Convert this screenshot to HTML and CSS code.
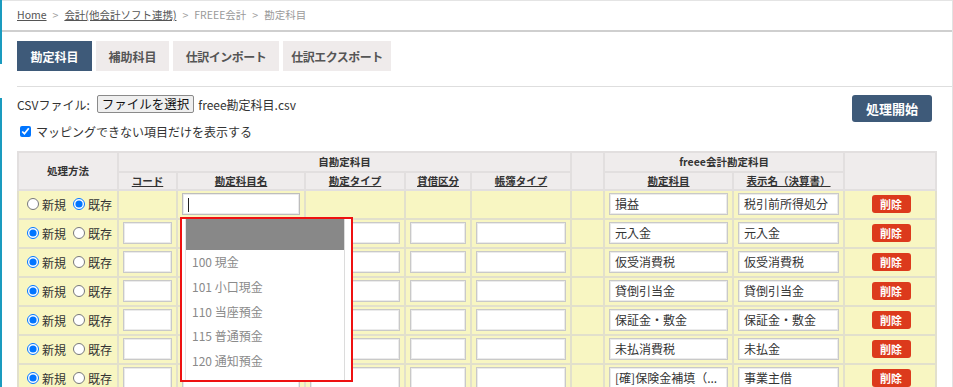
FILE: index.html
```html
<!DOCTYPE html>
<html lang="ja">
<head>
<meta charset="utf-8">
<title>勘定科目</title>
<link rel="stylesheet" href="styles.css">
</head>
<body>
<div class="page">
  <div class="rail"></div>
  <div class="main">
    <nav class="crumbs">
      <a href="#">Home</a><span class="sep">&gt;</span><a href="#">会計(他会計ソフト連携)</a><span class="sep">&gt;</span><span class="cur">FREEE会計</span><span class="sep">&gt;</span><span class="cur">勘定科目</span>
    </nav>
    <div class="tabs">
      <span class="tab active w-75">勘定科目</span>
      <span class="tab w-73">補助科目</span>
      <span class="tab kana w-106">仕訳インポート</span>
      <span class="tab kana w-108">仕訳エクスポート</span>
    </div>
    <div class="content">
      <div class="toolbar">
        <div class="file-row">
          <span>CSVファイル:</span>
          <button class="file-btn" type="button">ファイルを選択</button>
          <span>freee勘定科目.csv</span>
        </div>
        <button class="start-btn" type="button">処理開始</button>
      </div>
      <label class="check"><input type="checkbox" checked> マッピングできない項目だけを表示する</label>
      <table class="grid">
        <colgroup>
          <col class="c-method"><col class="c-code"><col class="c-name"><col class="c-type"><col class="c-side"><col class="c-book"><col class="c-blank"><col class="c-fname"><col class="c-fdisp"><col class="c-del">
        </colgroup>
        <thead>
          <tr>
            <th rowspan="2">処理方法</th>
            <th colspan="5">自勘定科目</th>
            <th rowspan="2"></th>
            <th colspan="2">freee会計勘定科目</th>
            <th rowspan="2"></th>
          </tr>
          <tr>
            <th><u>コード</u></th>
            <th><u>勘定科目名</u></th>
            <th><u>勘定タイプ</u></th>
            <th><u>貸借区分</u></th>
            <th><u>帳簿タイプ</u></th>
            <th><u>勘定科目</u></th>
            <th><u>表示名（決算書）</u></th>
          </tr>
        </thead>
        <tbody>
          <tr>
            <td class="method"><label><input type="radio" name="m1"> 新規</label><label><input type="radio" name="m1" checked> 既存</label></td>
            <td></td>
            <td class="anchor">
              <div class="field focus"><span class="caret"></span></div>
              <div class="dropdown">
                <div class="dd-inner">
                  <div class="dd-hl"></div>
                  <div class="dd-item">100 現金</div>
                  <div class="dd-item">101 小口現金</div>
                  <div class="dd-item">110 当座預金</div>
                  <div class="dd-item">115 普通預金</div>
                  <div class="dd-item">120 通知預金</div>
                </div>
              </div>
            </td>
            <td></td><td></td><td></td><td></td>
            <td><div class="field">損益</div></td>
            <td><div class="field">税引前所得処分</div></td>
            <td class="del"><button class="del-btn" type="button">削除</button></td>
          </tr>
          <tr>
            <td class="method"><label><input type="radio" name="m2" checked> 新規</label><label><input type="radio" name="m2"> 既存</label></td>
            <td><div class="field"></div></td><td><div class="field"></div></td><td><div class="field"></div></td><td><div class="field"></div></td><td><div class="field"></div></td><td></td>
            <td><div class="field">元入金</div></td><td><div class="field">元入金</div></td>
            <td class="del"><button class="del-btn" type="button">削除</button></td>
          </tr>
          <tr>
            <td class="method"><label><input type="radio" name="m3" checked> 新規</label><label><input type="radio" name="m3"> 既存</label></td>
            <td><div class="field"></div></td><td><div class="field"></div></td><td><div class="field"></div></td><td><div class="field"></div></td><td><div class="field"></div></td><td></td>
            <td><div class="field">仮受消費税</div></td><td><div class="field">仮受消費税</div></td>
            <td class="del"><button class="del-btn" type="button">削除</button></td>
          </tr>
          <tr>
            <td class="method"><label><input type="radio" name="m4" checked> 新規</label><label><input type="radio" name="m4"> 既存</label></td>
            <td><div class="field"></div></td><td><div class="field"></div></td><td><div class="field"></div></td><td><div class="field"></div></td><td><div class="field"></div></td><td></td>
            <td><div class="field">貸倒引当金</div></td><td><div class="field">貸倒引当金</div></td>
            <td class="del"><button class="del-btn" type="button">削除</button></td>
          </tr>
          <tr>
            <td class="method"><label><input type="radio" name="m5" checked> 新規</label><label><input type="radio" name="m5"> 既存</label></td>
            <td><div class="field"></div></td><td><div class="field"></div></td><td><div class="field"></div></td><td><div class="field"></div></td><td><div class="field"></div></td><td></td>
            <td><div class="field">保証金・敷金</div></td><td><div class="field">保証金・敷金</div></td>
            <td class="del"><button class="del-btn" type="button">削除</button></td>
          </tr>
          <tr>
            <td class="method"><label><input type="radio" name="m6" checked> 新規</label><label><input type="radio" name="m6"> 既存</label></td>
            <td><div class="field"></div></td><td><div class="field"></div></td><td><div class="field"></div></td><td><div class="field"></div></td><td><div class="field"></div></td><td></td>
            <td><div class="field">未払消費税</div></td><td><div class="field">未払金</div></td>
            <td class="del"><button class="del-btn" type="button">削除</button></td>
          </tr>
          <tr>
            <td class="method"><label><input type="radio" name="m7" checked> 新規</label><label><input type="radio" name="m7"> 既存</label></td>
            <td><div class="field"></div></td><td><div class="field"></div></td><td><div class="field"></div></td><td><div class="field"></div></td><td><div class="field"></div></td><td></td>
            <td><div class="field">[確]保険金補填（...</div></td><td><div class="field">事業主借</div></td>
            <td class="del"><button class="del-btn" type="button">削除</button></td>
          </tr>
        </tbody>
      </table>
    </div>
  </div>
</div>
</body>
</html>
```
FILE: styles.css
```css
html, body {
  margin: 0;
  padding: 0;
  background: #fff;
  height: 387px;
  overflow: hidden;
}
body {
  font-family: "Noto Sans CJK JP", sans-serif;
  font-size: 12px;
  color: #333;
}
.page {
  display: flex;
  align-items: stretch;
  min-height: 387px;
}
.rail {
  width: 2px;
  flex: 0 0 2px;
  background: linear-gradient(to bottom, #1a9bbf 0, #1a9bbf 64px, #fff 64px, #fff 98px, #1a9bbf 98px, #1a9bbf 100%);
}
.main {
  flex: 1;
  min-width: 0;
  border-right: 1px solid #e2e2e2;
}
.crumbs {
  height: 29px;
  border-top: 1px solid #e4e4e4;
  border-bottom: 2px solid #cfcfcf;
  padding-left: 15px;
  display: flex;
  align-items: center;
  font-size: 10.5px;
  line-height: 1;
  color: #9a9a9a;
}
.crumbs a {
  color: #555;
  text-decoration: underline;
}
.crumbs .sep {
  margin: 0 6px;
  color: #999;
}
.tabs {
  display: flex;
  gap: 4px;
  margin: 9px 0 0 15px;
  padding-bottom: 15px;
  border-bottom: 1px solid #dedede;
}
.tab {
  height: 30px;
  display: flex;
  align-items: center;
  justify-content: center;
  background: #efebeb;
  color: #555;
  font-weight: bold;
  font-size: 12px;
  white-space: nowrap;
}
.tab.kana {
  letter-spacing: -0.5px;
}
.tab.active {
  background: #3e5a79;
  color: #fff;
}
.w-75 { width: 75px; }
.w-73 { width: 73px; }
.w-106 { width: 106px; }
.w-108 { width: 108px; }
.content {
  padding: 0 20px 0 15px;
}
.toolbar {
  display: flex;
  justify-content: space-between;
  align-items: flex-start;
  padding-top: 8px;
}
.file-row {
  display: flex;
  align-items: center;
  gap: 4px;
  font-size: 12px;
  height: 18px;
}
.file-btn {
  font-family: inherit;
  font-size: 12.5px;
  line-height: 1;
  height: 18px;
  padding: 0 4px;
  margin-left: 3px;
  background: #efefef;
  border: 1px solid #8a8a8a;
  border-radius: 2px;
  color: #111;
}
.start-btn {
  font-family: inherit;
  font-weight: bold;
  font-size: 13px;
  color: #fff;
  background: #3e5a79;
  border: none;
  border-radius: 3px;
  width: 80px;
  height: 27px;
  padding: 0;
}
.check {
  display: flex;
  align-items: center;
  gap: 5px;
  margin-top: 1px;
  height: 16px;
  font-size: 12px;
}
.check input {
  margin: 0 0 0 3px;
  width: 11px;
  height: 11px;
}
.grid {
  margin-top: 12px;
  width: 918px;
  table-layout: fixed;
  border-collapse: collapse;
}
.c-method { width: 100px; }
.c-code { width: 59px; }
.c-name { width: 128px; }
.c-type { width: 100px; }
.c-side { width: 66px; }
.c-book { width: 100px; }
.c-blank { width: 33px; }
.c-fname { width: 129px; }
.c-fdisp { width: 111px; }
.c-del { width: 92px; }
.grid th {
  background: #efecec;
  border: 2px solid #e2dfdf;
  font-size: 10.5px;
  font-weight: bold;
  color: #333;
  height: 16px;
  padding: 0;
  line-height: 16px;
}
.grid thead tr:first-child th {
  height: 18px;
}
.grid th u {
  text-decoration: underline;
}
.grid td {
  background: #f8f6c2;
  border: 2px solid #e2e0cc;
  padding: 2px 4px 3px;
  height: 22px;
  vertical-align: middle;
}
.grid td.method {
  padding: 0 0 0 8px;
  white-space: nowrap;
}
.method label {
  display: inline-flex;
  align-items: center;
  margin-right: 7px;
  font-size: 12px;
}
.method input {
  margin: 0 3px 0 0;
  width: 12px;
  height: 12px;
}
.field {
  box-sizing: border-box;
  height: 22px;
  width: 100%;
  background: #fff;
  border: 1px solid #c9c9c9;
  box-shadow: inset 0 0 0 1px #ebebeb;
  font-size: 12px;
  line-height: 20px;
  padding: 0 5px;
  white-space: nowrap;
  overflow: hidden;
  color: #333;
}
.field.focus {
  border-color: #bdbdbd;
}
.caret {
  display: inline-block;
  width: 1px;
  height: 14px;
  background: #222;
  vertical-align: middle;
  margin-top: -2px;
}
.anchor {
  position: relative;
}
.dropdown {
  position: absolute;
  left: 2px;
  top: 26px;
  width: 173px;
  height: 165px;
  box-sizing: border-box;
  border: 2px solid #ee1111;
  background: #fff;
  z-index: 5;
}
.dd-inner {
  margin: 0 6px 0 3px;
  height: 100%;
  border-left: 1px solid #e4e4e4;
  border-right: 1px solid #dcdcdc;
  background: #fff;
}
.dd-hl {
  height: 31px;
  background: #888;
}
.dd-item {
  height: 24.8px;
  line-height: 24.8px;
  padding-left: 6px;
  color: #8a8a8a;
  font-size: 12px;
}
.grid td.del {
  text-align: center;
  padding-left: 6px;
}
.del-btn {
  font-family: inherit;
  font-size: 11px;
  font-weight: bold;
  color: #fff;
  background: #dc3a1c;
  border: none;
  border-radius: 3px;
  width: 39px;
  height: 18px;
  padding: 0;
  line-height: 18px;
}
```
